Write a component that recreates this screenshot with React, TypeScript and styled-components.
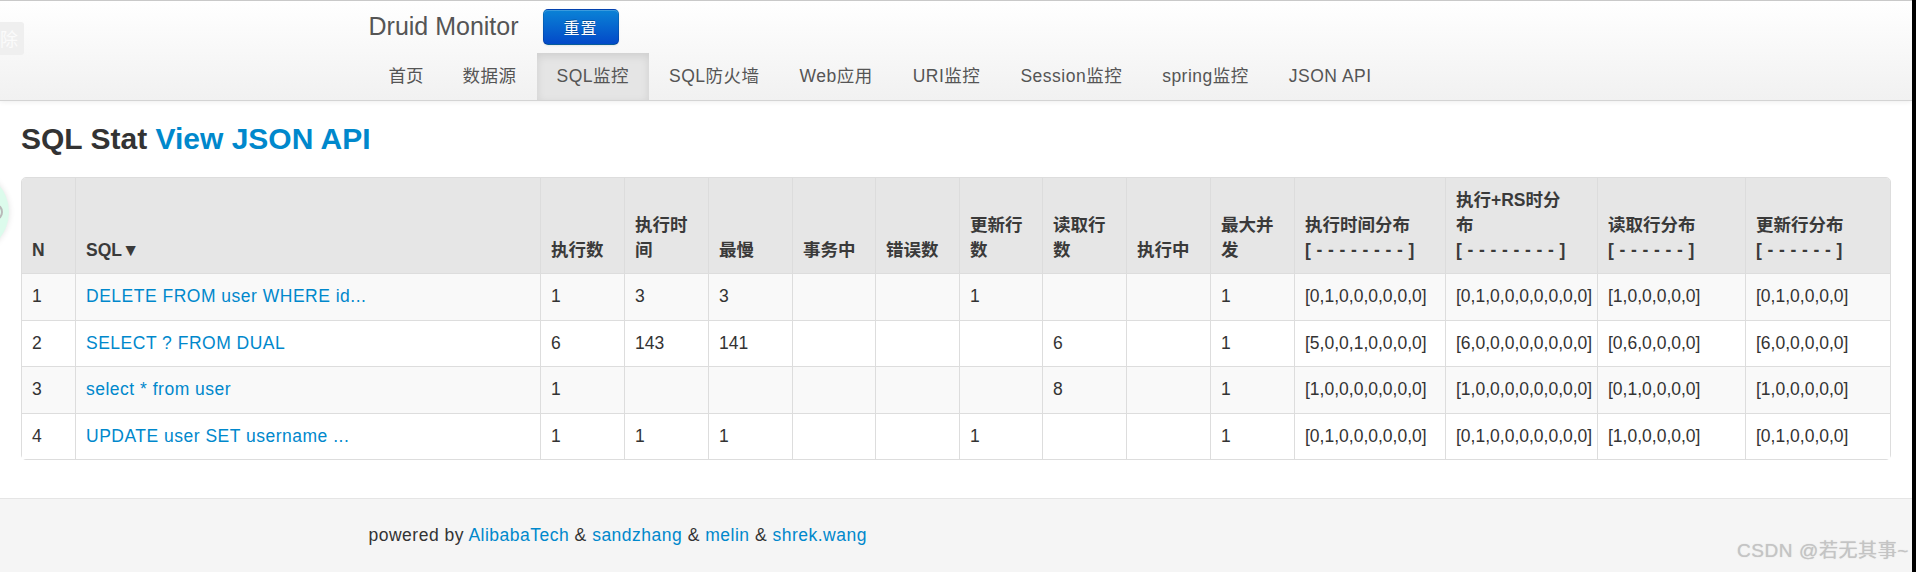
import React from 'react';
import styled, { createGlobalStyle } from 'styled-components';

const GlobalStyle = createGlobalStyle`
  html, body {
    margin: 0;
    padding: 0;
    overflow: hidden;
    background: #fff;
  }
  body {
    font-family: 'Liberation Sans', Arial, 'Noto Sans CJK SC', sans-serif;
    font-size: 17.5px;
    line-height: 25px;
    color: #333;
  }
  a { text-decoration: none; }
`;

const Page = styled.div`
  display: flex;
  width: 1916px;
  height: 572px;
  overflow: hidden;
`;

const Main = styled.div`
  position: relative;
  flex: 1;
  min-width: 0;
  display: flex;
  flex-direction: column;
  overflow: hidden;
`;

const EdgeStrip = styled.div`
  flex: none;
  width: 4px;
  background: #000;
`;

const Navbar = styled.header`
  flex: none;
  border-top: 1px solid #c9c9c9;
  border-bottom: 1px solid #d4d4d4;
  background: linear-gradient(#ffffff, #f1f1f1);
  box-shadow: 0 1px 5px rgba(0, 0, 0, 0.07);
`;

const NavContainer = styled.div`
  width: 1175px;
  margin: 0 auto;
`;

const BrandRow = styled.div`
  height: 52px;
  display: flex;
  align-items: center;
  gap: 24px;
`;

const Brand = styled.a`
  font-size: 25px;
  line-height: 30px;
  color: #555;
  margin-top: -2px;
`;

const ResetButton = styled.button`
  width: 76px;
  height: 36px;
  padding: 0;
  border: 1px solid rgba(0, 0, 0, 0.12);
  border-bottom-color: rgba(0, 0, 0, 0.28);
  border-radius: 5px;
  background: linear-gradient(#0a83d6, #0349c8);
  box-shadow: inset 0 1px 0 rgba(255, 255, 255, 0.2), 0 1px 2px rgba(0, 0, 0, 0.08);
  color: #fff;
  font-family: 'Noto Sans CJK SC', sans-serif;
  font-size: 16px;
  letter-spacing: 1px;
  text-shadow: 0 -1px 0 rgba(0, 0, 0, 0.25);
  cursor: pointer;
`;

const Tabs = styled.nav`
  display: flex;
  height: 47px;
`;

const Tab = styled.a<{ $active?: boolean; $tight?: boolean }>`
  display: block;
  padding: 0 ${(p) => (p.$tight ? '19px 0 20px' : '20px')};
  line-height: 47px;
  font-size: 17.5px;
  letter-spacing: ${(p) => (p.$tight ? '0' : '0.5px')};
  color: #555;
  background: ${(p) => (p.$active ? '#e5e5e5' : 'transparent')};
  box-shadow: ${(p) => (p.$active ? 'inset 0 3px 8px rgba(0, 0, 0, 0.1)' : 'none')};
`;

const Content = styled.section`
  flex: none;
  padding: 13px 23px 0 21px;
`;

const Heading = styled.h3`
  margin: 0 0 13px;
  font-size: 30px;
  line-height: 50px;
  font-weight: bold;
  color: #333;
`;

const HeadingLink = styled.a`
  color: #0088cc;
`;

const Table = styled.table`
  width: 100%;
  table-layout: fixed;
  border-collapse: separate;
  border-spacing: 0;
  border: 1px solid #dddddd;
  border-radius: 5px;
`;

const HeadCell = styled.th`
  padding: 10px;
  text-align: left;
  vertical-align: bottom;
  font-weight: bold;
  line-height: 25px;
  color: #3a3a3a;
  background: #e6e6e6;
  border-left: 1px solid #dcdcdc;
  &:first-child {
    border-left: none;
    border-top-left-radius: 4px;
  }
  &:last-child {
    border-top-right-radius: 4px;
  }
`;

const Dashes = styled.span`
  white-space: nowrap;
  letter-spacing: 0.4px;
`;

const BodyRow = styled.tr<{ $striped: boolean }>`
  background: ${(p) => (p.$striped ? '#f9f9f9' : '#ffffff')};
`;

const Cell = styled.td`
  padding: 10px 10px 10.5px;
  line-height: 25px;
  vertical-align: top;
  white-space: nowrap;
  overflow: hidden;
  color: #333;
  border-top: 1px solid #dddddd;
  border-left: 1px solid #dddddd;
  &:first-child {
    border-left: none;
  }
`;

const SqlLink = styled.a`
  color: #0088cc;
  letter-spacing: 0.5px;
`;

const Footer = styled.footer`
  flex: 1;
  margin-top: 38px;
  padding-top: 24px;
  background: #f5f5f5;
  border-top: 1px solid #e5e5e5;
`;

const FooterText = styled.div`
  width: 1175px;
  margin: 0 auto;
  color: #333;
  letter-spacing: 0.5px;
`;

const FooterLink = styled.a`
  color: #0088cc;
`;

const Watermark = styled.div`
  position: absolute;
  right: 3px;
  bottom: 9px;
  font-family: 'Liberation Sans', Arial, 'Noto Sans CJK SC', sans-serif;
  font-size: 19px;
  line-height: 24px;
  letter-spacing: 0.6px;
  color: #c4c4c4;
  text-shadow: 0 0 1px rgba(120, 120, 120, 0.35);
`;

const GhostButton = styled.div`
  position: absolute;
  left: -20px;
  top: 22px;
  width: 44px;
  height: 33px;
  border-radius: 3px;
  background: #efefef;
  color: #fbfbfb;
  font-family: 'Noto Sans CJK SC', sans-serif;
  font-size: 18px;
  line-height: 33px;
  text-align: right;
  padding-right: 6px;
  box-sizing: border-box;
`;

const FloatBubble = styled.div`
  position: absolute;
  left: -73px;
  top: 171px;
  width: 82px;
  height: 82px;
  border-radius: 50%;
  background: #dcfbec;
  box-shadow: 0 0 6px rgba(0, 0, 0, 0.12);
`;

const BubbleRing = styled.div`
  position: absolute;
  right: 6px;
  top: 33px;
  width: 10px;
  height: 12px;
  border: 2px solid #b9b9b9;
  border-radius: 50%;
`;

const colWidths = [53, 465, 84, 84, 84, 83, 84, 83, 84, 84, 84, 151, 152, 148, 145];

const d8 = '[ - - - - - - - - ]';
const d6 = '[ - - - - - - ]';

const headers: React.ReactNode[] = [
  'N',
  'SQL▼',
  '执行数',
  '执行时间',
  '最慢',
  '事务中',
  '错误数',
  '更新行数',
  '读取行数',
  '执行中',
  '最大并发',
  <>执行时间分布<br /><Dashes>{d8}</Dashes></>,
  <>执行+RS时分<br />布<br /><Dashes>{d8}</Dashes></>,
  <>读取行分布<br /><Dashes>{d6}</Dashes></>,
  <>更新行分布<br /><Dashes>{d6}</Dashes></>,
];

type Row = {
  n: string;
  sql: string;
  cells: string[];
};

const rows: Row[] = [
  {
    n: '1',
    sql: 'DELETE FROM user WHERE id...',
    cells: ['1', '3', '3', '', '', '1', '', '', '1', '[0,1,0,0,0,0,0,0]', '[0,1,0,0,0,0,0,0,0]', '[1,0,0,0,0,0]', '[0,1,0,0,0,0]'],
  },
  {
    n: '2',
    sql: 'SELECT ? FROM DUAL',
    cells: ['6', '143', '141', '', '', '', '6', '', '1', '[5,0,0,1,0,0,0,0]', '[6,0,0,0,0,0,0,0,0]', '[0,6,0,0,0,0]', '[6,0,0,0,0,0]'],
  },
  {
    n: '3',
    sql: 'select * from user',
    cells: ['1', '', '', '', '', '', '8', '', '1', '[1,0,0,0,0,0,0,0]', '[1,0,0,0,0,0,0,0,0]', '[0,1,0,0,0,0]', '[1,0,0,0,0,0]'],
  },
  {
    n: '4',
    sql: 'UPDATE user SET username ...',
    cells: ['1', '1', '1', '', '', '1', '', '', '1', '[0,1,0,0,0,0,0,0]', '[0,1,0,0,0,0,0,0,0]', '[1,0,0,0,0,0]', '[0,1,0,0,0,0]'],
  },
];

const tabs = ['首页', '数据源', 'SQL监控', 'SQL防火墙', 'Web应用', 'URI监控', 'Session监控', 'spring监控', 'JSON API'];

export default function App() {
  return (
    <>
      <GlobalStyle />
      <Page>
        <Main>
          <Navbar>
            <NavContainer>
              <BrandRow>
                <Brand>Druid Monitor</Brand>
                <ResetButton>重置</ResetButton>
              </BrandRow>
              <Tabs>
                {tabs.map((t, i) => (
                  <Tab key={t} $active={t === 'SQL监控'} $tight={i === 0}>
                    {t}
                  </Tab>
                ))}
              </Tabs>
            </NavContainer>
          </Navbar>

          <Content>
            <Heading>
              SQL Stat <HeadingLink>View JSON API</HeadingLink>
            </Heading>
            <Table>
              <colgroup>
                {colWidths.map((w, i) => (
                  <col key={i} style={{ width: w }} />
                ))}
              </colgroup>
              <thead>
                <tr>
                  {headers.map((h, i) => (
                    <HeadCell key={i}>{h}</HeadCell>
                  ))}
                </tr>
              </thead>
              <tbody>
                {rows.map((r, i) => (
                  <BodyRow key={r.n} $striped={i % 2 === 0}>
                    <Cell>{r.n}</Cell>
                    <Cell>
                      <SqlLink>{r.sql}</SqlLink>
                    </Cell>
                    {r.cells.map((c, j) => (
                      <Cell key={j}>{c}</Cell>
                    ))}
                  </BodyRow>
                ))}
              </tbody>
            </Table>
          </Content>

          <Footer>
            <FooterText>
              powered by <FooterLink>AlibabaTech</FooterLink> &amp; <FooterLink>sandzhang</FooterLink> &amp;{' '}
              <FooterLink>melin</FooterLink> &amp; <FooterLink>shrek.wang</FooterLink>
            </FooterText>
          </Footer>

          <GhostButton>除</GhostButton>
          <FloatBubble>
            <BubbleRing />
          </FloatBubble>
          <Watermark>CSDN @若无其事~</Watermark>
        </Main>
        <EdgeStrip />
      </Page>
    </>
  );
}
